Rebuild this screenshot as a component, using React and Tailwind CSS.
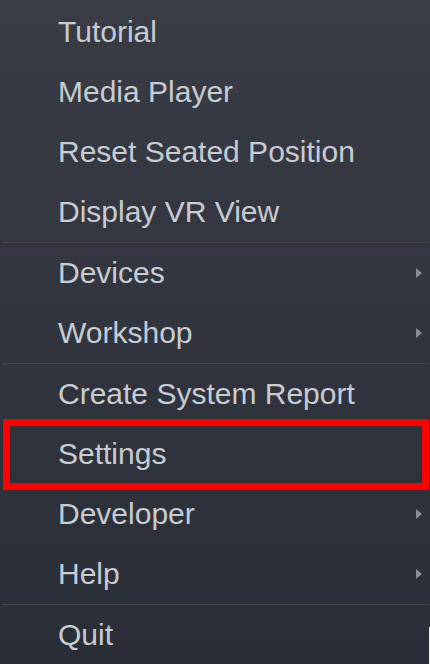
import React from 'react';

const groups = [
  [
    { label: 'Tutorial' },
    { label: 'Media Player' },
    { label: 'Reset Seated Position' },
    { label: 'Display VR View' },
  ],
  [
    { label: 'Devices', sub: true },
    { label: 'Workshop', sub: true },
  ],
  [
    { label: 'Create System Report' },
    { label: 'Settings', highlight: true },
    { label: 'Developer', sub: true },
    { label: 'Help', sub: true },
  ],
  [{ label: 'Quit' }],
];

const Arrow = () => (
  <svg width="6" height="10" viewBox="0 0 6 10" className="shrink-0">
    <path d="M0 0 L6 5 L0 10 Z" fill="#8b8d90" />
  </svg>
);

const MenuItem = ({ item }) => (
  <div className="relative h-[60px] flex items-center pl-[58px] pr-[8px]">
    <span className="flex-1 text-[30px] text-[#c7cbd2] leading-none">{item.label}</span>
    {item.sub && <Arrow />}
    {item.highlight && (
      <div className="absolute left-[3px] right-[1px] -top-[5px] -bottom-[6px] border-[7px] border-[#ff0000]" />
    )}
  </div>
);

export default function App() {
  return (
    <div
      className="relative w-[430px] h-[664px] overflow-hidden pt-[2px] bg-gradient-to-b from-[#393c45] to-[#2a2e37]"
      style={{ fontFamily: '"Liberation Sans", Arial, sans-serif' }}
    >
      {groups.map((group, gi) => (
        <div key={gi}>
          {gi > 0 && <div className="mx-[2px] h-px bg-[#47443f]" />}
          {group.map((item) => (
            <MenuItem key={item.label} item={item} />
          ))}
        </div>
      ))}
      {/* sliver of the window behind */}
      <div className="absolute right-0 bottom-0 w-px h-[37px] bg-[#e6e6e6]" />
    </div>
  );
}
